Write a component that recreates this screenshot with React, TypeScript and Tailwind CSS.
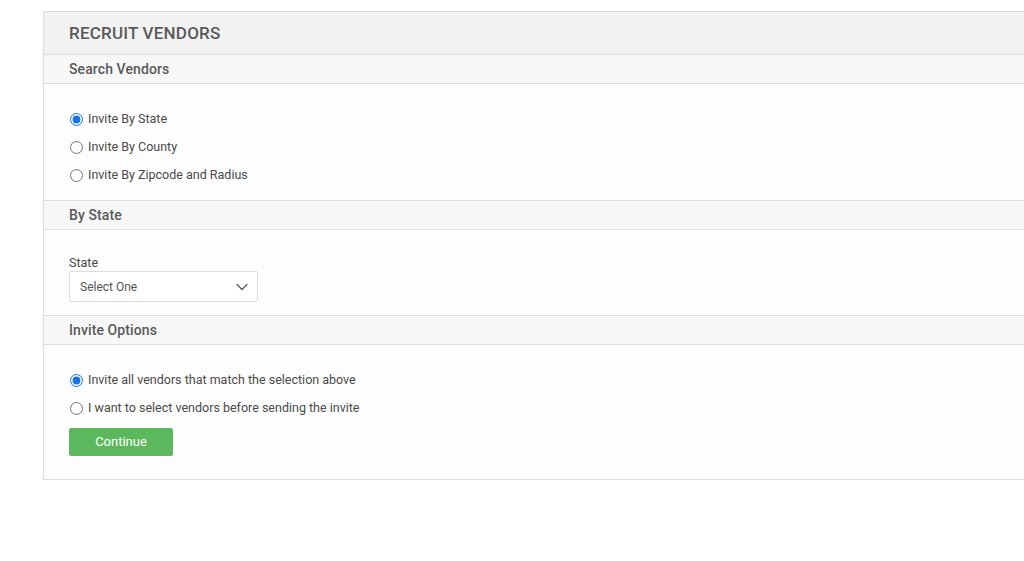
import { ChevronDown } from "lucide-react";

function SectionHeader({ title }: { title: string }) {
  return (
    <div className="h-[29px] flex items-center px-[25px] bg-[#f7f7f7] border-b border-[#dddddd] text-[14px] font-medium text-[#5a5a5a] tracking-[0.1px]">
      {title}
    </div>
  );
}

function Radio({ name, label, checked }: { name: string; label: string; checked?: boolean }) {
  return (
    <label className="h-[28px] flex items-center gap-[5px] text-[12.5px] text-[#4a4a4a]">
      <input type="radio" name={name} defaultChecked={checked} className="w-[13px] h-[13px] m-0 accent-[#1a73e8]" />
      <span>{label}</span>
    </label>
  );
}

export default function App() {
  return (
    <div
      className="w-screen h-screen overflow-hidden bg-white pt-[11px] pl-[43px]"
      style={{ fontFamily: "Roboto, 'Liberation Sans', sans-serif" }}
    >
      <div className="w-[1010px] border border-[#dddddd] bg-[#fdfdfd]">
        <div className="h-[43px] flex items-center pt-[1px] px-[25px] bg-[#f2f2f2] border-b border-[#dddddd] text-[17px] font-medium text-[#5a5a5a] tracking-[0.2px]">
          RECRUIT VENDORS
        </div>

        <SectionHeader title="Search Vendors" />
        <div className="h-[117px] flex flex-col pt-[21px] px-[26px] border-b border-[#dddddd]">
          <Radio name="by" label="Invite By State" checked />
          <Radio name="by" label="Invite By County" />
          <Radio name="by" label="Invite By Zipcode and Radius" />
        </div>

        <SectionHeader title="By State" />
        <div className="h-[86px] flex flex-col pt-[25px] px-[25px] border-b border-[#dddddd]">
          <div className="text-[12.5px] leading-[16px] text-[#4a4a4a]">State</div>
          <div className="w-[189px] h-[31px] flex items-center justify-between pl-[10px] pr-[5px] border border-[#dddddd] rounded-[2px] bg-white text-[12px] text-[#555]">
            <span>Select One</span>
            <ChevronDown className="w-[20px] h-[20px] text-[#666]" strokeWidth={1.8} />
          </div>
        </div>

        <SectionHeader title="Invite Options" />
        <div className="h-[134px] flex flex-col pt-[21px] px-[26px]">
          <Radio name="opt" label="Invite all vendors that match the selection above" checked />
          <Radio name="opt" label="I want to select vendors before sending the invite" />
          <button className="mt-[6px] w-[104px] h-[28px] rounded-[2px] bg-[#5cb85c] text-white text-[13px] ml-[-1px]">
            Continue
          </button>
        </div>
      </div>
    </div>
  );
}
